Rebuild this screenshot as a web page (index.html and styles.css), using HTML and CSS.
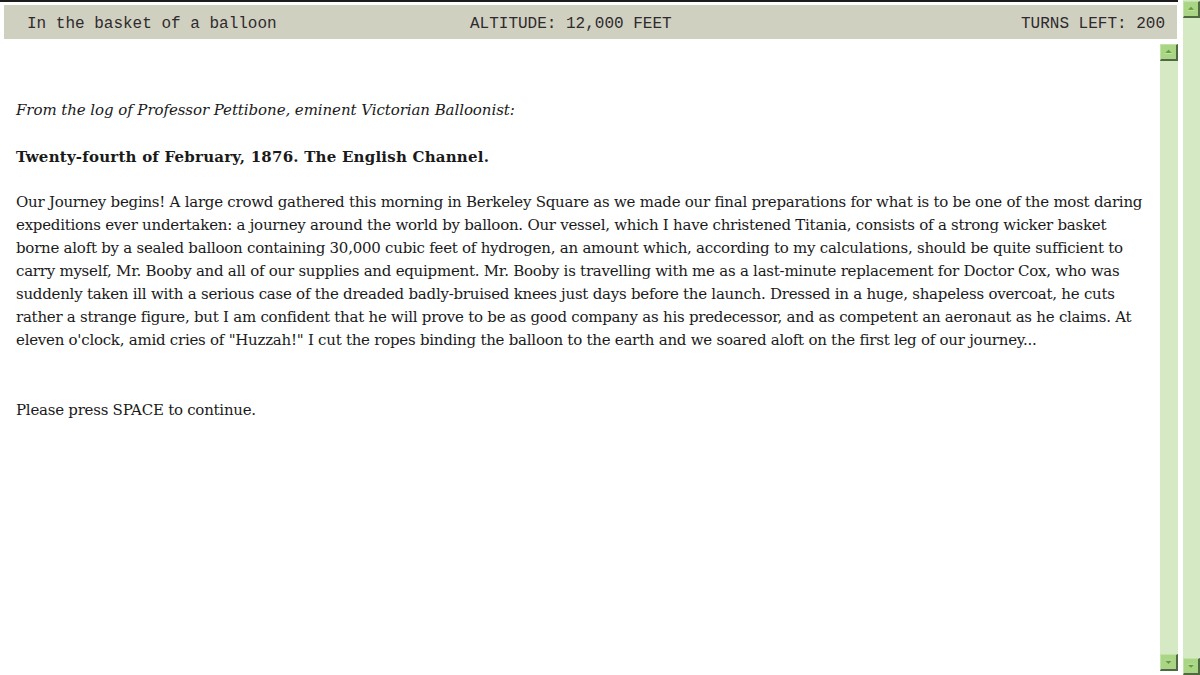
FILE: index.html
```html
<!DOCTYPE html>
<html lang="en">
<head>
<meta charset="utf-8">
<title>Around the World in 80 Days</title>
<link rel="stylesheet" href="styles.css">
</head>
<body>
<div class="window">
  <div class="page">
    <header class="status">
      <span class="status-location">In the basket of a balloon</span>
      <span class="status-altitude">ALTITUDE: 12,000 FEET</span>
      <span class="status-turns">TURNS LEFT: 200</span>
    </header>
    <div class="view">
      <main class="story">
        <p class="intro">From the log of Professor Pettibone, eminent Victorian Balloonist:</p>
        <p class="entry-date">Twenty-fourth of February, 1876. The English Channel.</p>
        <p class="entry">Our Journey begins! A large crowd gathered this morning in Berkeley Square as we made our final preparations for what is to be one of the most daring expeditions ever undertaken: a journey around the world by balloon. Our vessel, which I have christened Titania, consists of a strong wicker basket borne aloft by a sealed balloon containing 30,000 cubic feet of hydrogen, an amount which, according to my calculations, should be quite sufficient to carry myself, Mr. Booby and all of our supplies and equipment. Mr. Booby is travelling with me as a last-minute replacement for Doctor Cox, who was suddenly taken ill with a serious case of the dreaded badly-bruised knees just days before the launch. Dressed in a huge, shapeless overcoat, he cuts rather a strange figure, but I am confident that he will prove to be as good company as his predecessor, and as competent an aeronaut as he claims. At eleven o'clock, amid cries of "Huzzah!" I cut the ropes binding the balloon to the earth and we soared aloft on the first leg of our journey...</p>
        <p class="prompt">Please press SPACE to continue.</p>
      </main>
      <div class="scrollbar scrollbar-inner">
        <span class="sb-button">
          <svg viewBox="0 0 16 16" width="16" height="16"><polygon points="4.5,9 8,5.5 11.5,9" fill="#5f9d3c"/><rect x="4" y="9" width="8" height="1" fill="#c6e3ad"/></svg>
        </span>
        <span class="sb-track"></span>
        <span class="sb-button">
          <svg viewBox="0 0 16 16" width="16" height="16"><polygon points="4.5,6.5 8,10 11.5,6.5" fill="#5f9d3c"/><rect x="4" y="5.5" width="8" height="1" fill="#c6e3ad"/></svg>
        </span>
      </div>
    </div>
  </div>
  <div class="scrollbar scrollbar-outer">
    <span class="sb-button">
      <svg viewBox="0 0 16 16" width="16" height="16"><polygon points="4.5,9 8,5.5 11.5,9" fill="#5f9d3c"/><rect x="4" y="9" width="8" height="1" fill="#c6e3ad"/></svg>
    </span>
    <span class="sb-track"></span>
    <span class="sb-button">
      <svg viewBox="0 0 16 16" width="16" height="16"><polygon points="4.5,6.5 8,10 11.5,6.5" fill="#5f9d3c"/><rect x="4" y="5.5" width="8" height="1" fill="#c6e3ad"/></svg>
    </span>
  </div>
</div>
</body>
</html>
```
FILE: styles.css
```css
html, body {
  margin: 0;
  padding: 0;
  background: #ffffff;
  overflow: hidden;
}

.window {
  display: flex;
  width: 1200px;
  height: 675px;
}

.page {
  flex: 1;
  display: flex;
  flex-direction: column;
  border-top: 2px solid #1c1c1c;
  padding: 3px 0 4px 4px;
  min-width: 0;
}

/* status line across the top */
.status {
  display: grid;
  grid-template-columns: 443px auto 1fr;
  align-items: center;
  height: 34px;
  margin-right: 1px;
  padding: 3px 12px 0 23px;
  box-sizing: border-box;
  background: #d0d0c0;
  color: #2e2a2e;
  font-family: "Liberation Mono", "Courier New", monospace;
  font-size: 16px;
  white-space: pre;
}

.status-turns {
  text-align: right;
}

.view {
  flex: 1;
  display: flex;
  margin-top: 5px;
  min-height: 0;
}

.story {
  flex: 1;
  padding: 55px 14px 0 12px;
  font-family: "DejaVu Serif", Georgia, serif;
  font-size: 15px;
  letter-spacing: -0.25px;
  line-height: 23px;
  color: #1a1a1a;
}

.story p {
  margin: 0 0 23px 0;
}

.story .intro {
  font-style: italic;
  letter-spacing: -0.07px;
  margin-bottom: 24px;
}

.story .entry-date {
  font-weight: bold;
  letter-spacing: 0.22px;
  margin-bottom: 22px;
}

.story .entry {
  margin-bottom: 47px;
}

/* green scrollbars */
.scrollbar {
  display: flex;
  flex-direction: column;
  width: 18px;
  background: #d5e9c5;
}

.scrollbar-outer {
  width: 17px;
  margin-left: 5px;
  padding-top: 1px;
}

.sb-track {
  flex: 1;
}

.sb-button {
  display: flex;
  align-items: center;
  justify-content: center;
  box-sizing: border-box;
  width: 18px;
  height: 17px;
  background: #a9d584;
  border-top: 1px solid #c2e3a6;
  border-left: 1px solid #c2e3a6;
  border-right: 2px solid #4f6a42;
  border-bottom: 2px solid #4f6a42;
}

.scrollbar-outer .sb-button {
  width: 17px;
}
```
